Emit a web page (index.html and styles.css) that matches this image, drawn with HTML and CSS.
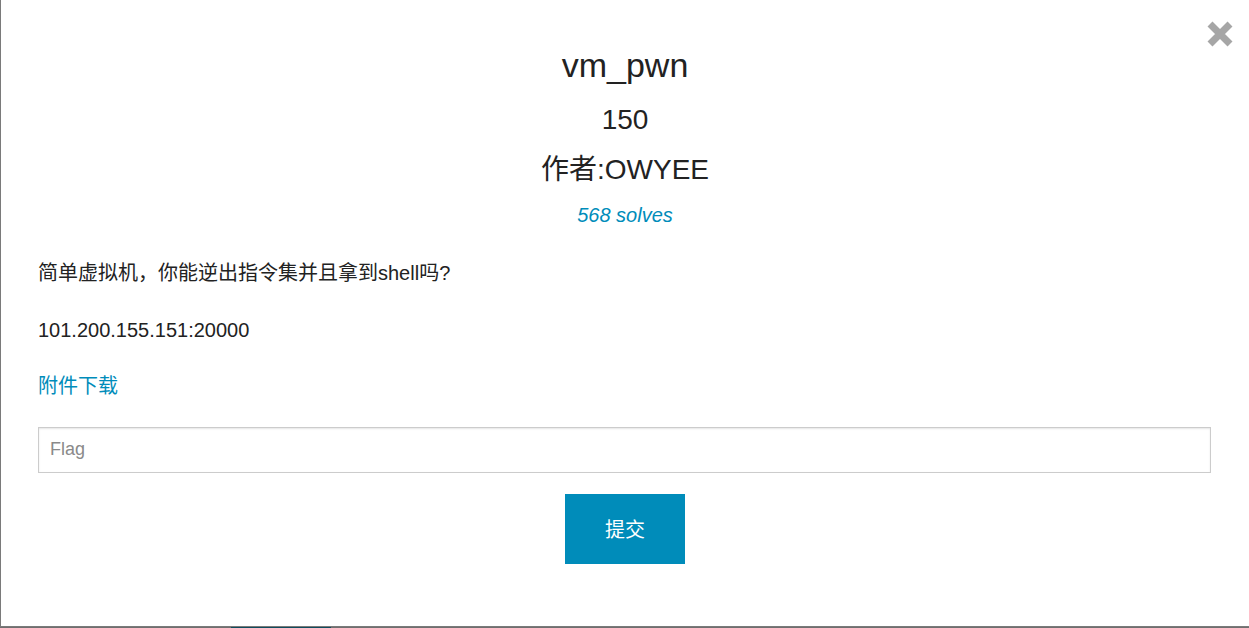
FILE: index.html
```html
<!DOCTYPE html>
<html lang="zh">
<head>
<meta charset="utf-8">
<title>vm_pwn</title>
<link rel="stylesheet" href="styles.css">
</head>
<body>
<div class="modal">
  <a class="close" aria-label="关闭">
    <svg width="26" height="26" viewBox="0 0 26 26"><path d="M3 3 L23 23 M23 3 L3 23" stroke="#a6a6a6" stroke-width="7" stroke-linecap="butt"/></svg>
  </a>
  <div class="head">
    <h3 class="name">vm_pwn</h3>
    <h4 class="value">150</h4>
    <h4 class="author">作者:OWYEE</h4>
    <div class="solves">568 solves</div>
  </div>
  <div class="desc">
    <p>简单虚拟机，你能逆出指令集并且拿到shell吗?</p>
    <p>101.200.155.151:20000</p>
    <p><a class="link">附件下载</a></p>
  </div>
  <input class="flag" type="text" placeholder="Flag">
  <div class="actions">
    <button class="submit">提交</button>
  </div>
</div>
<div class="backdrop-strip"><span class="tab"></span></div>
</body>
</html>
```

FILE: styles.css
```css
html, body {
  margin: 0;
  padding: 0;
}
body {
  background: #6f6f6f;
  font-family: "Liberation Sans", Arial, "Noto Sans CJK SC", sans-serif;
  color: #222;
  width: 1249px;
  height: 628px;
  overflow: hidden;
}
.modal {
  position: relative;
  box-sizing: border-box;
  width: 1249px;
  height: 627px;
  background: #fff;
  border-left: 1px solid #7a7a7a;
  border-bottom: 1px solid #7a7a7a;
  padding: 45px 37px 0 37px;
  display: flex;
  flex-direction: column;
}
.close {
  position: absolute;
  left: 1206px;
  top: 21px;
  width: 26px;
  height: 26px;
  display: block;
}
.close svg { display: block; }
.head {
  display: flex;
  flex-direction: column;
  align-items: center;
  text-align: center;
}
.name {
  margin: 0;
  font-size: 34px;
  line-height: 40px;
  font-weight: normal;
}
.value, .author {
  margin: 0;
  font-size: 28px;
  line-height: 50px;
  font-weight: normal;
}
.value { margin-top: 10px; }
.solves {
  margin-top: 5px;
  font-size: 20px;
  line-height: 30px;
  font-style: italic;
  color: #008cba;
}
.desc {
  margin-top: 29px;
}
.desc p {
  margin: 0 0 28.5px 0;
  font-size: 20px;
  line-height: 28px;
}
.desc p:last-child {
  margin-bottom: 26.5px;
}
.link {
  color: #008cba;
  text-decoration: none;
}
.flag {
  box-sizing: border-box;
  width: 1173px;
  height: 46px;
  margin: 0;
  padding: 0 11px;
  border: 1px solid #cccccc;
  box-shadow: inset 0 1px 2px rgba(0,0,0,0.1);
  font-family: inherit;
  font-size: 18px;
  color: #333;
  background: #fff;
  outline: none;
}
.flag::placeholder { color: #8a8a8a; }
.actions {
  display: flex;
  justify-content: center;
  margin-top: 21px;
}
.submit {
  width: 120px;
  height: 70px;
  border: 0;
  margin: 0;
  padding: 0;
  background: #008cba;
  color: #fff;
  font-family: "Liberation Sans", "Noto Sans CJK SC", sans-serif;
  font-size: 20px;
}
.backdrop-strip {
  height: 1px;
  display: flex;
}
.tab {
  margin-left: 231px;
  width: 100px;
  height: 1px;
  background: #0f4c5c;
}
```
